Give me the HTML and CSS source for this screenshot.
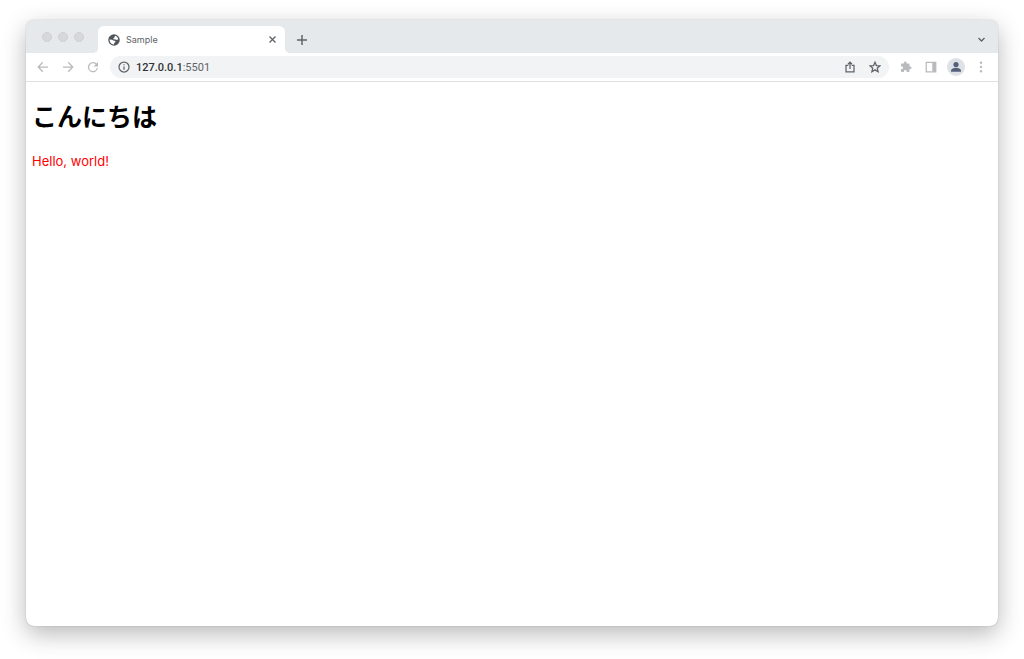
FILE: index.html
```html
<!doctype html>
<html lang="ja">

<head>
    <meta charset="utf-8">
    <meta name="viewport" content="width=device-width, initial-scale=1">
    <title>Sample</title>
    <link rel="stylesheet" href="styles.css">
</head>

<body>
    <div class="window">
        <div class="tabstrip">
            <div class="lights">
                <span></span>
                <span></span>
                <span></span>
            </div>
            <div class="tab">
                <svg class="globe" viewBox="0 0 24 24">
                    <circle cx="12" cy="12" r="11.500" fill="#50555a" />
                    <path fill="#fff" d="M14 3.500c3.500.8 6 3.500 6.500 7l-3 1.500-3.500-1.500-2.500.5-1-2 2-1.500z" />
                    <path fill="#fff" d="M3 11l5 .5 3.500 2 2.500 0 1 2.500-2.500 2-.5 3c-5 0-9-4.500-9-10z" />
                </svg>
                <span class="tab-title">Sample</span>
                <button class="tab-close" type="button" aria-label="Close tab">
                    <svg viewBox="0 0 9 9"><path d="M1.500 1.500l6 6M7.500 1.500l-6 6" /></svg>
                </button>
            </div>
            <button class="new-tab" type="button" aria-label="New tab">
                <svg viewBox="0 0 10 10"><path d="M5 0v10M0 5h10" /></svg>
            </button>
            <button class="tab-search" type="button" aria-label="Search tabs">
                <svg viewBox="0 0 9 9"><path d="M1.500 3l3 3 3-3" /></svg>
            </button>
        </div>

        <div class="toolbar">
            <button class="icon faded" type="button" aria-label="Back">
                <svg viewBox="0 0 24 24"><path d="M22 12H3M11.500 2.500L2.500 12l9 9.500" /></svg>
            </button>
            <button class="icon faded" type="button" aria-label="Forward">
                <svg viewBox="0 0 24 24"><path d="M2 12h19M12.500 2.500l9 9.500-9 9.500" /></svg>
            </button>
            <button class="icon faded" type="button" aria-label="Reload">
                <svg viewBox="0 0 24 24">
                    <path d="M19.500 7.500A9 9 0 1 0 20.800 14" />
                    <path class="solid" d="M22 2v9h-9z" />
                </svg>
            </button>
            <div class="address">
                <button class="icon" type="button" aria-label="View site information">
                    <svg viewBox="0 0 24 24">
                        <circle cx="12" cy="12" r="10" />
                        <path d="M12 11v6.500M12 6.500v2.200" />
                    </svg>
                </button>
                <span class="url"><b>127.0.0.1</b>:5501</span>
                <button class="icon" type="button" aria-label="Share">
                    <svg viewBox="0 0 24 24">
                        <path d="M8.500 8.500H4v13h16v-13h-4.500M12 16V3M8 6.500l4-4 4 4" />
                    </svg>
                </button>
                <button class="icon" type="button" aria-label="Bookmark this page">
                    <svg viewBox="0 0 24 24">
                        <path d="M12 2.500l2.800 6.600 7.200.6-5.500 4.700 1.700 7L12 17.700l-6.200 3.700 1.700-7L2 9.700l7.200-.6z" />
                    </svg>
                </button>
            </div>
            <button class="icon faded" type="button" aria-label="Extensions">
                <svg viewBox="0 0 24 24">
                    <path class="solid" d="M20.500 11H19V7c0-1.100-.9-2-2-2h-4V3.500a2.500 2.500 0 0 0-5 0V5H4c-1.100 0-2 .9-2 2v3.800h1.500a2.700 2.700 0 0 1 0 5.400H2V20c0 1.100.9 2 2 2h3.800v-1.500a2.700 2.700 0 0 1 5.400 0V22H17c1.100 0 2-.9 2-2v-4h1.500a2.500 2.500 0 0 0 0-5z" />
                </svg>
            </button>
            <button class="icon faded" type="button" aria-label="Side panel">
                <svg viewBox="0 0 24 24">
                    <path d="M2.500 2.500h19v19h-19z" />
                    <path class="solid" d="M14.500 2.500h7v19h-7z" />
                </svg>
            </button>
            <button class="avatar" type="button" aria-label="Profile">
                <svg viewBox="0 0 18 18">
                    <circle cx="9" cy="6.500" r="2.600" />
                    <path d="M4 13.800v-1c0-1.900 3-3 5-3s5 1.100 5 3v1z" />
                </svg>
            </button>
            <button class="icon faded" type="button" aria-label="Menu">
                <svg viewBox="0 0 24 24">
                    <circle class="solid" cx="12" cy="3.500" r="2.400" />
                    <circle class="solid" cx="12" cy="12" r="2.400" />
                    <circle class="solid" cx="12" cy="20.500" r="2.400" />
                </svg>
            </button>
        </div>

        <main class="page">
            <h1>こんにちは</h1>
            <p>Hello, world!</p>
        </main>
    </div>
</body>

</html>
```
FILE: styles.css
```css
* {
    box-sizing: border-box;
}

body {
    margin: 0;
    min-height: 100vh;
    padding: 20px 26px 33px;
    display: flex;
    background-color: #fff;
    font-family: Roboto, "Noto Sans CJK JP", sans-serif;
}

button {
    display: flex;
    align-items: center;
    justify-content: center;
    padding: 0;
    border: none;
    background: none;
    color: #5f6368;
    cursor: pointer;
}

svg {
    display: block;
    fill: none;
    stroke: currentColor;
    stroke-width: 2.5;
}

.window {
    flex: 1;
    display: flex;
    flex-direction: column;
    border-radius: 8px;
    overflow: hidden;
    background-color: #fff;
    box-shadow: 0 0 1px rgba(0, 0, 0, 0.4), 0 8px 24px rgba(0, 0, 0, 0.28);
}

/* tabs */
.tabstrip {
    display: flex;
    align-items: center;
    height: 33px;
    padding: 0 12px 0 16px;
    background-color: #e5e9ec;
}

.lights {
    display: flex;
    gap: 6px;
    margin-right: 14px;
}

.lights span {
    width: 10px;
    height: 10px;
    border-radius: 50%;
    background-color: #d7d8da;
    border: 1px solid #cfd0d2;
}

.tab {
    position: relative;
    align-self: flex-end;
    display: flex;
    align-items: center;
    gap: 6px;
    width: 187px;
    height: 27px;
    padding: 0 8px 0 10px;
    border-radius: 6px 6px 0 0;
    background-color: #fff;
}

/* curved feet of the tab */
.tab::before,
.tab::after {
    content: "";
    position: absolute;
    bottom: 0;
    width: 5px;
    height: 5px;
}

.tab::before {
    right: 100%;
    background: radial-gradient(circle at 0 0, transparent 5px, #fff 5px);
}

.tab::after {
    left: 100%;
    background: radial-gradient(circle at 100% 0, transparent 5px, #fff 5px);
}

.globe {
    width: 12px;
    height: 12px;
    stroke: none;
}

.tab-title {
    flex: 1;
    font-family: Inter, Roboto, sans-serif;
    font-size: 9px;
    color: #5f6368;
}

.tab-close svg,
.tab-search svg {
    width: 9px;
    height: 9px;
    stroke-width: 1.3;
}

.new-tab,
.tab-search {
    padding-top: 6px;
}

.new-tab {
    margin-left: 12px;
}

.new-tab svg {
    width: 10px;
    height: 10px;
    stroke-width: 1.5;
}

.tab-search {
    margin-left: auto;
}

/* toolbar */
.toolbar {
    display: flex;
    align-items: center;
    gap: 13px;
    height: 29px;
    padding: 0 11px;
    border-bottom: 1px solid #dfe1e3;
}

.icon svg {
    width: 12px;
    height: 12px;
}

.faded {
    color: #b8babd;
}

.solid {
    fill: currentColor;
    stroke: none;
}

.address {
    flex: 1;
    display: flex;
    align-items: center;
    gap: 13px;
    height: 22px;
    margin-right: -2px;
    margin-left: -2px;
    padding: 0 8px;
    border-radius: 11px;
    background-color: #f1f3f4;
}

.url {
    flex: 1;
    margin-left: -7px;
    font-size: 11px;
    color: #5f6368;
}

.url b {
    font-weight: 500;
    color: #303236;
}

.avatar {
    width: 18px;
    height: 18px;
    margin: 0 -3px;
    border-radius: 50%;
    background-color: #dee1e6;
    color: #55607a;
}

.avatar svg {
    width: 18px;
    height: 18px;
    fill: currentColor;
    stroke: none;
}

/* page content */
.page {
    flex: 1;
    padding: 17px 6px;
}

.page h1 {
    margin: 0 0 14px;
    font-size: 25px;
    line-height: 38px;
    font-weight: bold;
    color: #000;
}

.page p {
    margin: 0;
    font-family: Inter, "Liberation Sans", sans-serif;
    font-size: 13px;
    line-height: 20px;
    color: #f00;
}
```
